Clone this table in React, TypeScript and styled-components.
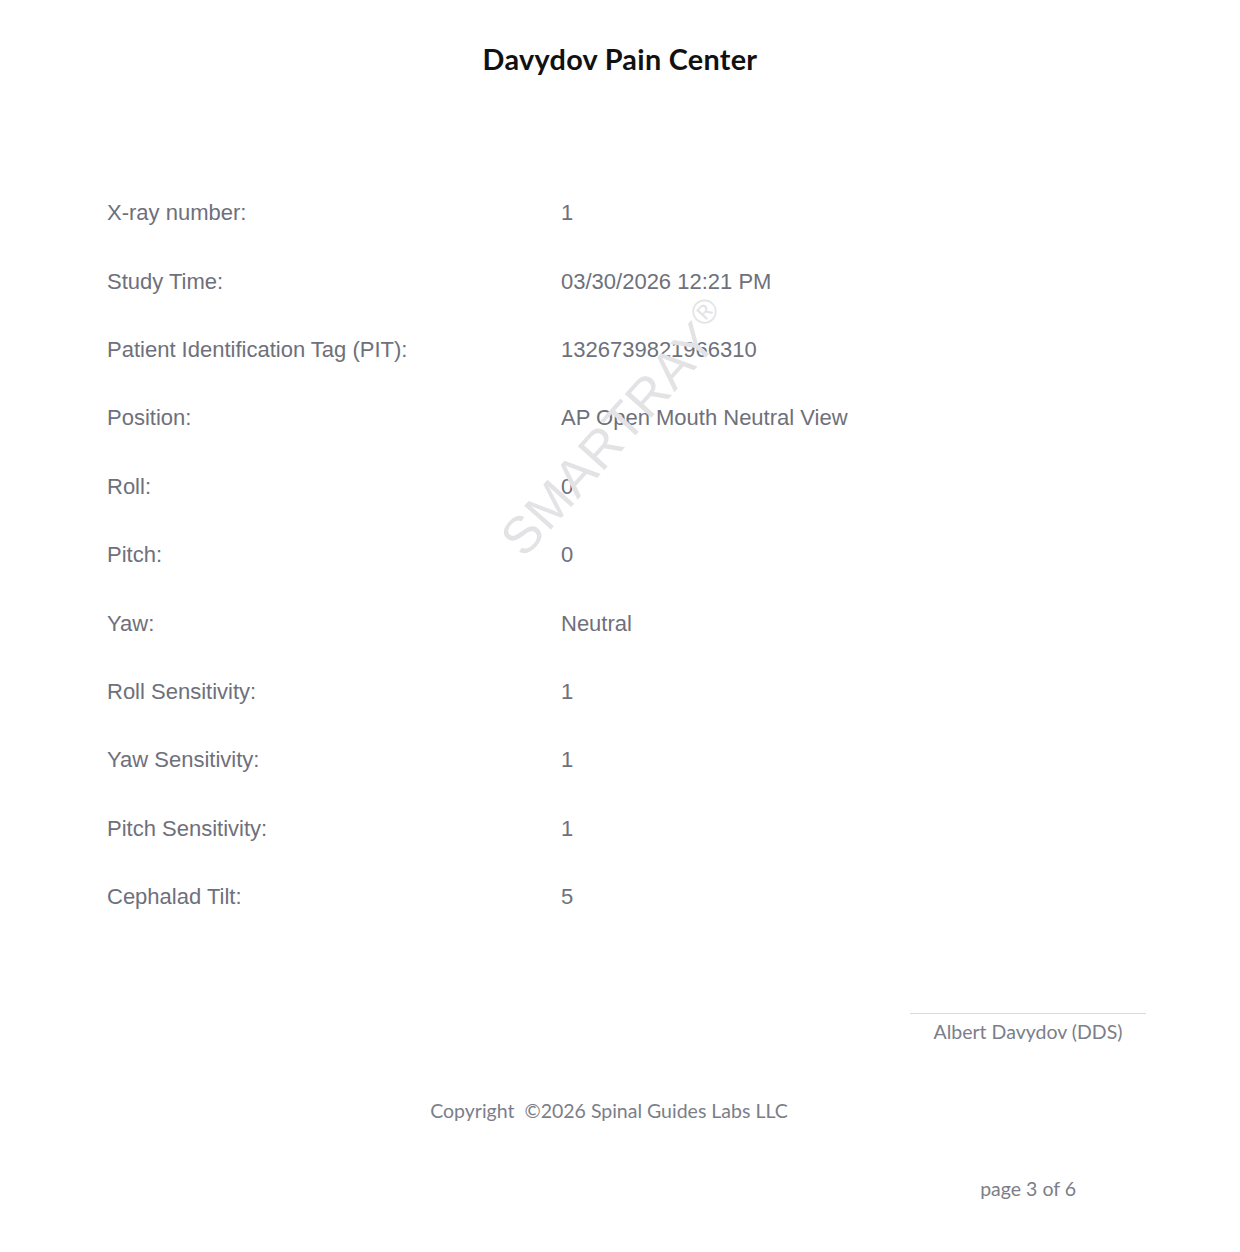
import React from "react";
import styled, { createGlobalStyle } from "styled-components";

const Global = createGlobalStyle`
  html, body { margin: 0; padding: 0; background: #fff; }
  body { width: 1240px; height: 1252px; overflow: hidden; }
`;

const Page = styled.div`
  position: relative;
  width: 1240px;
  height: 1252px;
  display: flex;
  flex-direction: column;
  background: #fff;
`;

const Title = styled.h1`
  margin: 42px 0 0;
  text-align: center;
  font-family: Lato, "Noto Sans", sans-serif;
  font-weight: 700;
  font-size: 28.8px;
  line-height: 34px;
  color: #111;
  letter-spacing: 0.3px;
`;

const Table = styled.div`
  margin: 103px 0 0 107px;
  display: grid;
  grid-template-columns: 454px 1fr;
  grid-auto-rows: 68.4px;
  font-family: "Liberation Sans", Arial, sans-serif;
  font-size: 22px;
  color: #6e707b;
`;

const Cell = styled.div`
  display: flex;
  align-items: center;
`;

const SignatureBlock = styled.div`
  align-self: flex-end;
  margin: 82px 94px 0 0;
  width: 236px;
  display: flex;
  flex-direction: column;
  align-items: center;
`;

const Line = styled.div`
  width: 100%;
  border-top: 1px solid #d9d9dd;
`;

const FooterText = styled.div`
  font-family: Lato, "Noto Sans", sans-serif;
  font-size: 19.5px;
  color: #7b7e89;
  line-height: 24px;
`;

const Name = styled(FooterText)`
  margin-top: 6px;
`;

const Copyright = styled(FooterText)`
  margin: 55px 0 0;
  align-self: center;
  transform: translateX(-11px);
  white-space: pre;
`;

const PageNum = styled(FooterText)`
  align-self: flex-end;
  margin: 54px 164px 0 0;
`;

const Watermark = styled.div`
  position: absolute;
  left: 616px;
  top: 428px;
  transform: translate(-50%, -50%) rotate(-48deg);
  font-family: "Liberation Sans", Arial, sans-serif;
  font-size: 52px;
  color: #e3e3e6;
  white-space: nowrap;
  pointer-events: none;
  letter-spacing: 1px;
`;

const Reg = styled.sup`
  font-size: 34px;
  vertical-align: 20px;
`;

const rows: [string, string][] = [
  ["X-ray number:", "1"],
  ["Study Time:", "03/30/2026 12:21 PM"],
  ["Patient Identification Tag (PIT):", "1326739821966310"],
  ["Position:", "AP Open Mouth Neutral View"],
  ["Roll:", "0"],
  ["Pitch:", "0"],
  ["Yaw:", "Neutral"],
  ["Roll Sensitivity:", "1"],
  ["Yaw Sensitivity:", "1"],
  ["Pitch Sensitivity:", "1"],
  ["Cephalad Tilt:", "5"],
];

export default function App() {
  return (
    <Page>
      <Global />
      <Watermark>
        SMARTRAY<Reg>®</Reg>
      </Watermark>
      <Title>Davydov Pain Center</Title>
      <Table>
        {rows.map(([k, v]) => (
          <React.Fragment key={k}>
            <Cell>{k}</Cell>
            <Cell>{v}</Cell>
          </React.Fragment>
        ))}
      </Table>
      <SignatureBlock>
        <Line />
        <Name>Albert Davydov (DDS)</Name>
      </SignatureBlock>
      <Copyright>{"Copyright  ©2026 Spinal Guides Labs LLC"}</Copyright>
      <PageNum>page 3 of 6</PageNum>
    </Page>
  );
}
